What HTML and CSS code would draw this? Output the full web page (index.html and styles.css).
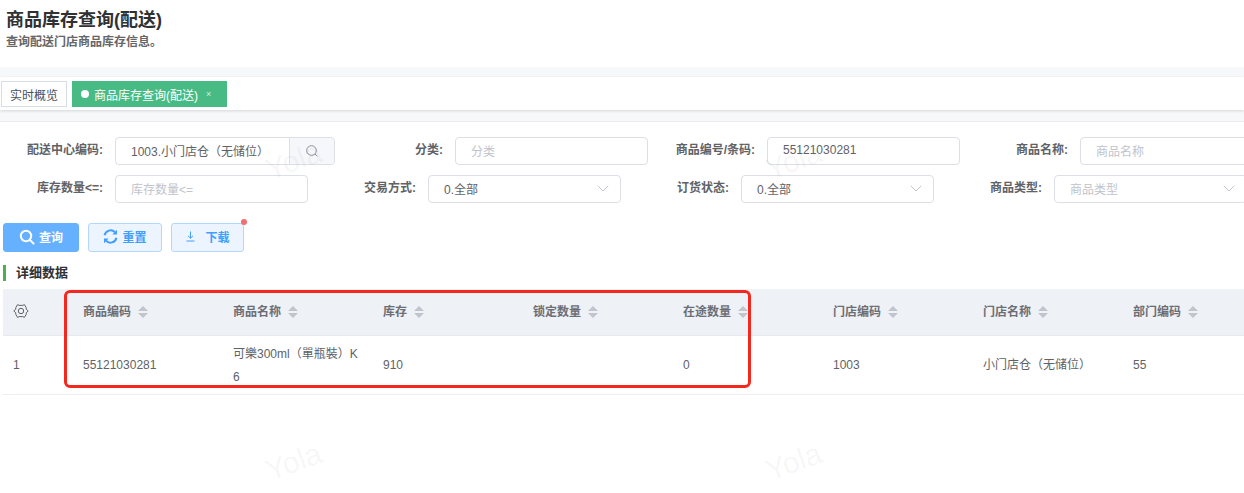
FILE: index.html
```html
<!DOCTYPE html>
<html lang="zh-CN">
<head>
<meta charset="utf-8">
<title>商品库存查询(配送)</title>
<link rel="stylesheet" href="styles.css">
</head>
<body>
<div class="page">
  <header class="page-head">
    <h1 class="page-title">商品库存查询(配送)</h1>
    <p class="page-sub">查询配送门店商品库存信息。</p>
  </header>
  <div class="band">
    <nav class="tabs">
      <span class="tab">实时概览</span>
      <span class="tab tab-active"><i class="tab-dot"></i>商品库存查询(配送)<span class="tab-x">×</span></span>
    </nav>
  </div>
  <main class="content">
    <form class="filters">
      <div class="row">
        <div class="field">
          <label class="label">配送中心编码:</label>
          <div class="input input-group">
            <span class="input-main value">1003.小门店仓（无储位）</span>
            <span class="append"><svg width="14" height="14" viewBox="0 0 14 14" fill="none" stroke="#8a8f99" stroke-width="1"><circle cx="6.5" cy="6.5" r="4.8"/><path d="M10 10l2.4 2.4"/></svg></span>
          </div>
        </div>
        <div class="field field-tight"><label class="label">分类:</label><div class="input placeholder">分类</div></div>
        <div class="field"><label class="label">商品编号/条码:</label><div class="input value">55121030281</div></div>
        <div class="field"><label class="label">商品名称:</label><div class="input placeholder">商品名称</div></div>
      </div>
      <div class="row">
        <div class="field"><label class="label">库存数量&lt;=:</label><div class="input placeholder">库存数量&lt;=</div></div>
        <div class="field"><label class="label">交易方式:</label><div class="input select value">0.全部<svg class="chev" width="12" height="7" viewBox="0 0 12 7" fill="none" stroke="#c0c4cc"><path d="M.8.8L6 6l5.2-5.2"/></svg></div></div>
        <div class="field"><label class="label">订货状态:</label><div class="input select value">0.全部<svg class="chev" width="12" height="7" viewBox="0 0 12 7" fill="none" stroke="#c0c4cc"><path d="M.8.8L6 6l5.2-5.2"/></svg></div></div>
        <div class="field"><label class="label">商品类型:</label><div class="input select placeholder">商品类型<svg class="chev" width="12" height="7" viewBox="0 0 12 7" fill="none" stroke="#c0c4cc"><path d="M.8.8L6 6l5.2-5.2"/></svg></div></div>
      </div>
    </form>
    <div class="actions">
      <button type="button" class="btn btn-primary"><svg width="16" height="16" viewBox="0 0 16 16" fill="none" stroke="#fff" stroke-width="2"><circle cx="7" cy="7" r="5.2"/><path d="M11 11l3.600 3.600" stroke-linecap="round"/></svg>查询</button>
      <button type="button" class="btn btn-plain btn-reset"><svg width="15" height="15" viewBox="0 0 15 15" fill="none" stroke="#409eff" stroke-width="2"><path d="M1.600 6.300A6 6 0 0 1 12 3.400"/><path d="M13.400 8.700A6 6 0 0 1 3 11.600"/><path d="M14 .8v4.600H9.400z" fill="#409eff" stroke="none"/><path d="M1 14.200V9.600h4.600z" fill="#409eff" stroke="none"/></svg>重置</button>
      <button type="button" class="btn btn-plain btn-down"><svg width="11" height="11" viewBox="0 0 11 11" fill="none" stroke="#409eff" stroke-width="1"><path d="M5.500 .5v6.500M3 4.800l2.500 2.400L8 4.800M1.500 10h8"/></svg>下载<i class="badge"></i></button>
    </div>
    <h2 class="section-title">详细数据</h2>
    <table class="grid">
      <colgroup><col class="col-first"><col class="col"><col class="col"><col class="col"><col class="col"><col class="col"><col class="col"><col class="col"><col class="col"></colgroup>
      <thead>
        <tr>
          <th><svg class="gear" width="16" height="16" viewBox="0 0 16 16" fill="none" stroke="#606266" stroke-width="1" stroke-linejoin="round"><path d="M4.600 1.600L6.200 2.400H9.800L11.400 1.600L13.200 4.600L13.300 6.300L15.200 8L13.300 9.700L13.200 11.400L11.400 14.400L9.800 13.600H6.200L4.600 14.400L2.800 11.400L2.700 9.700L.8 8L2.700 6.300L2.800 4.600Z"/><circle cx="8" cy="8" r="2.700"/></svg></th>
          <th>商品编码<i class="sort"></i></th>
          <th>商品名称<i class="sort"></i></th>
          <th>库存<i class="sort"></i></th>
          <th>锁定数量<i class="sort"></i></th>
          <th>在途数量<i class="sort"></i></th>
          <th>门店编码<i class="sort"></i></th>
          <th>门店名称<i class="sort"></i></th>
          <th>部门编码<i class="sort"></i></th>
        </tr>
      </thead>
      <tbody>
        <tr>
          <td>1</td>
          <td>55121030281</td>
          <td>可樂300ml（單瓶裝）K6</td>
          <td>910</td>
          <td></td>
          <td>0</td>
          <td>1003</td>
          <td>小门店仓（无储位）</td>
          <td>55</td>
        </tr>
      </tbody>
    </table>
  </main>
  <div class="highlight"></div>
  <span class="mark mark-a">Yola</span>
  <span class="mark mark-b">Yola</span>
  <span class="mark mark-c">Yola</span>
  <span class="mark mark-d">Yola</span>
</div>
</body>
</html>
```
FILE: styles.css
```css
* { box-sizing: border-box; }
html, body { margin: 0; padding: 0; }
body {
  width: 1244px;
  height: 493px;
  overflow: hidden;
  background: #fff;
  font-family: "Liberation Sans", "Noto Sans CJK SC", sans-serif;
  font-size: 12px;
  color: #606266;
}
.page { position: relative; width: 1244px; height: 493px; overflow: hidden; }

.page-head { height: 67px; padding: 9px 6px 0; }
.page-title { margin: 0; font-size: 18px; line-height: 23px; font-weight: 700; color: #303133; }
.page-sub { margin: 2px 0 0; font-size: 12px; line-height: 17px; font-weight: 700; color: #666; }

.band {
  height: 55px;
  padding-top: 10px;
  background: #f7f8fa;
  border-bottom: 1px solid #e9ebef;
}
.tabs {
  display: flex;
  align-items: center;
  gap: 5px;
  height: 33px;
  padding: 1px 0 0 1px;
  background: #fff;
  box-shadow: 0 1px 3px rgba(0, 0, 0, .14);
}
.tab {
  display: flex;
  align-items: center;
  height: 26px;
  padding: 0 8px;
  border: 1px solid #d8dce5;
  color: #495060;
}
.tab-active {
  width: 155px;
  padding: 0 0 0 8px;
  background: #48bb85;
  border-color: #48bb85;
  color: #fff;
}
.tab-dot { width: 8px; height: 8px; margin-right: 5px; border-radius: 50%; background: #fff; }
.tab-x { margin-left: 8px; font-size: 9px; opacity: .75; }

.content { padding: 15px 0 0 3px; }
.filters { display: flex; flex-direction: column; gap: 10px; }
.row { display: flex; height: 28px; }
.field { display: flex; align-items: center; flex: none; margin-right: 8px; }
.field-tight { margin-right: 7px; }
.label { width: 100px; height: 28px; margin-right: 12px; line-height: 26px; text-align: right; font-weight: 700; color: #606266; }
.input {
  position: relative;
  display: flex;
  align-items: center;
  width: 193px;
  height: 28px;
  padding: 0 0 2px 15px;
  border: 1px solid #dcdfe6;
  border-radius: 4px;
  background: #fff;
}
.value { color: #606266; }
.placeholder { color: #c0c4cc; }
.input-group { width: 220px; padding: 0; }
.input-main { flex: 1; padding: 0 0 2px 15px; }
.append {
  display: flex;
  align-items: center;
  justify-content: center;
  width: 45px;
  height: 26px;
  background: #f5f7fa;
  border-left: 1px solid #dcdfe6;
  border-radius: 0 4px 4px 0;
}
.chev { position: absolute; right: 11px; top: 9px; }

.actions { display: flex; gap: 9px; margin-top: 20px; }
.btn {
  position: relative;
  display: flex;
  align-items: center;
  justify-content: center;
  height: 29px;
  padding: 0 0 2px;
  border: 1px solid #b3d8ff;
  border-radius: 3px;
  font: 700 12px "Liberation Sans", "Noto Sans CJK SC", sans-serif;
}
.btn-primary { width: 76px; gap: 4px; background: #66b1ff; border-color: #66b1ff; color: #fff; }
.btn-plain { background: #ecf5ff; color: #409eff; }
.btn-reset { width: 74px; gap: 4px; }
.btn-down { width: 73px; gap: 9px; }
.badge {
  position: absolute;
  top: -5px;
  right: -4px;
  width: 6px;
  height: 6px;
  border-radius: 50%;
  background: #f56c6c;
}

.section-title {
  margin: 13px 0 8px;
  padding-left: 10px;
  border-left: 3px solid #4caf50;
  font-size: 13px;
  line-height: 16px;
  font-weight: 700;
  color: #303133;
}

.grid { width: 1270px; table-layout: fixed; border-collapse: collapse; }
.col-first { width: 70px; }
.col { width: 150px; }
.grid th {
  height: 46px;
  padding: 0 10px 2px;
  background: #eef1f6;
  text-align: left;
  font-weight: 700;
  color: #6b6e75;
  border-bottom: 1px solid #e6e9ef;
}
.grid td {
  padding: 7px 10px 5px;
  line-height: 23px;
  word-break: break-all;
  border-bottom: 1px solid #ebeef5;
  color: #606266;
}
.gear { display: block; margin-left: 0; }
.sort {
  display: inline-block;
  position: relative;
  width: 10px;
  height: 12px;
  margin-left: 7px;
  vertical-align: -2px;
}
.sort::before, .sort::after {
  content: "";
  position: absolute;
  left: 0;
  border-left: 5px solid transparent;
  border-right: 5px solid transparent;
}
.sort::before { top: 0; border-bottom: 5px solid #c0c4cc; }
.sort::after { bottom: 0; border-top: 5px solid #c0c4cc; }

.highlight {
  position: absolute;
  left: 64px;
  top: 290px;
  width: 687px;
  height: 98px;
  border: 3px solid #f5281e;
  border-radius: 6px;
}
.mark {
  position: absolute;
  font-size: 30px;
  line-height: 34px;
  color: rgba(0, 0, 0, .05);
  transform: rotate(-20deg);
  pointer-events: none;
}
.mark-a { left: 265px; top: 144px; }
.mark-b { left: 765px; top: 144px; }
.mark-c { left: 265px; top: 445px; }
.mark-d { left: 765px; top: 445px; }
```
